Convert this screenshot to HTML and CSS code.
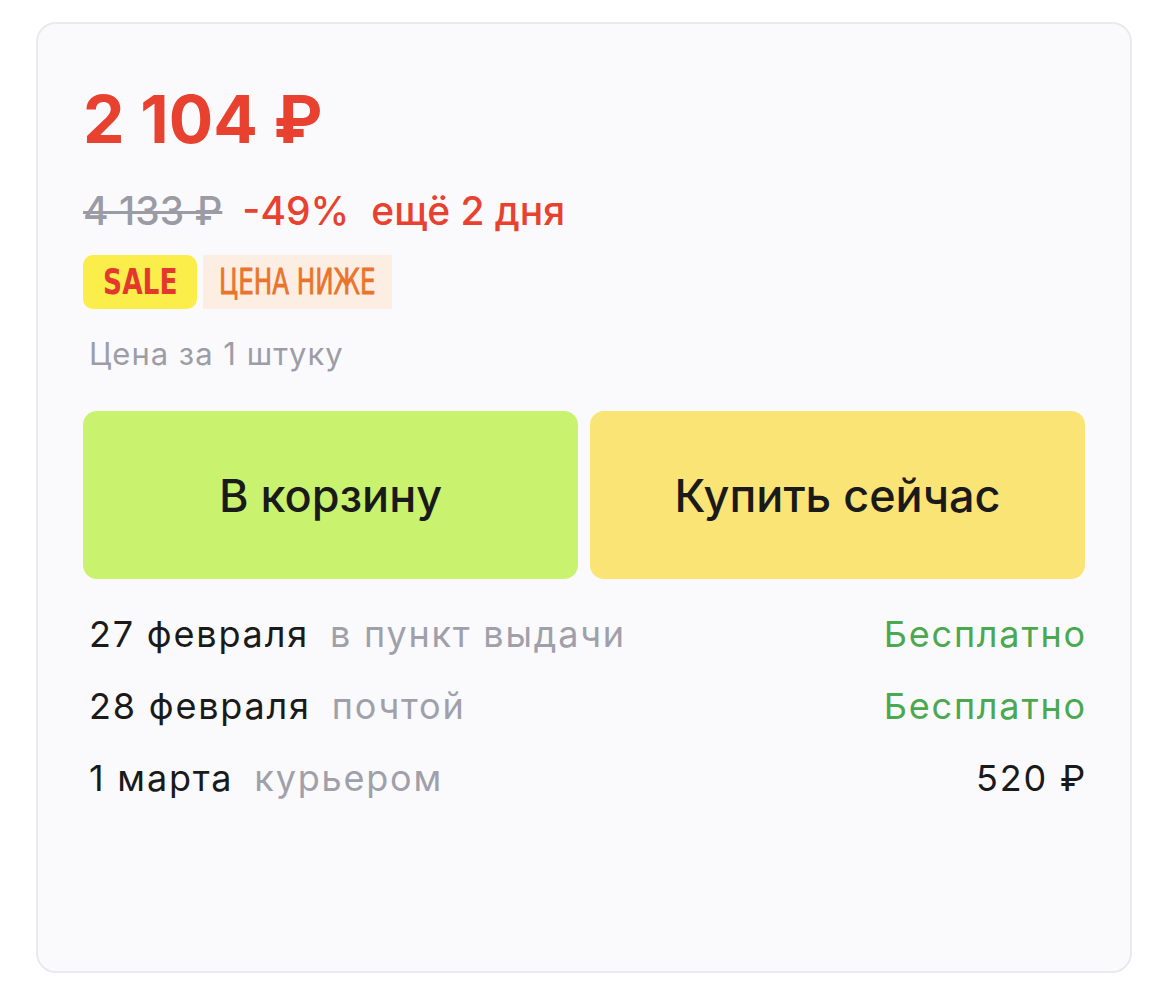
FILE: index.html
```html
<!DOCTYPE html>
<html lang="ru">
<head>
<meta charset="utf-8">
<link rel="stylesheet" href="styles.css">
</head>
<body>
<div class="card">
  <div class="price">2 104 ₽</div>
  <div class="sub">
    <span class="old">4 133 ₽</span>
    <span class="disc">-49%</span>
    <span class="left">ещё 2 дня</span>
  </div>
  <div class="badges">
    <span class="badge sale"><span class="cond">SALE</span></span>
    <span class="badge lower"><span class="cond">ЦЕНА НИЖЕ</span></span>
  </div>
  <div class="unit">Цена за 1 штуку</div>
  <div class="buttons">
    <button class="btn cart">В корзину</button>
    <button class="btn buy">Купить сейчас</button>
  </div>
  <div class="delivery">
    <div class="row"><span class="date">27 февраля</span><span class="how">в пункт выдачи</span><span class="cost free">Бесплатно</span></div>
    <div class="row"><span class="date">28 февраля</span><span class="how">почтой</span><span class="cost free">Бесплатно</span></div>
    <div class="row"><span class="date">1 марта</span><span class="how">курьером</span><span class="cost">520 ₽</span></div>
  </div>
</div>
</body>
</html>
```

FILE: styles.css
```css
html, body {
  margin: 0;
  padding: 0;
  background: #ffffff;
}
body {
  font-family: Inter, "Noto Sans", sans-serif;
  color: #1a1a1a;
}
.card {
  box-sizing: border-box;
  margin: 22px 0 0 36px;
  width: 1096px;
  height: 951px;
  border: 2px solid #e9e9ef;
  border-radius: 20px;
  background: #fafafd;
  padding: 55px 45px 0 45px;
}
.price {
  font-size: 66px;
  line-height: 80px;
  font-weight: 700;
  color: #e8412f;
}
.sub {
  margin-top: 28px;
  height: 48px;
  line-height: 48px;
  font-size: 39px;
  font-weight: 500;
  display: flex;
  gap: 20px;
  white-space: nowrap;
}
.old {
  color: #9b9ba6;
  text-decoration: line-through;
  text-decoration-thickness: 3px;
}
.disc, .left {
  color: #e8412f;
}
.left {
  margin-left: 2px;
}
.badges {
  margin-top: 20px;
  display: flex;
  gap: 6px;
  height: 54px;
}
.badge {
  display: flex;
  align-items: center;
  justify-content: center;
  height: 54px;
  box-sizing: border-box;
  white-space: nowrap;
  overflow: hidden;
}
.cond {
  font-family: "DejaVu Sans Condensed", "DejaVu Sans", sans-serif;
  font-stretch: condensed;
  font-size: 35px;
  font-weight: 700;
  display: inline-block;
  transform: scaleX(0.84);
  white-space: nowrap;
}
.sale {
  width: 114px;
  background: #fbee4a;
  border-radius: 10px;
  color: #e4382e;
}
.lower {
  width: 189px;
  background: #fdeee3;
  color: #e9742c;
}
.lower .cond {
  font-weight: 400;
  -webkit-text-stroke: 0.8px #e9742c;
  transform: scaleX(0.78);
}
.unit {
  margin-top: 25px;
  padding-left: 6px;
  font-size: 31px;
  letter-spacing: 1px;
  line-height: 40px;
  color: #9d9da8;
}
.buttons {
  margin-top: 37px;
  display: flex;
  gap: 12px;
}
.btn {
  flex: 1;
  height: 168px;
  border: none;
  border-radius: 14px;
  font-family: Inter, "Noto Sans", sans-serif;
  font-size: 45px;
  font-weight: 500;
  color: #1a1a1a;
  padding: 0;
}
.cart {
  background: #c9f36f;
}
.buy {
  background: #fae475;
}
.delivery {
  margin-top: 19px;
  padding-left: 6px;
}
.row {
  display: flex;
  height: 72px;
  line-height: 72px;
  font-size: 36px;
  letter-spacing: 1.8px;
  white-space: nowrap;
}
.date {
  color: #1a1a1a;
}
.how {
  margin-left: 21px;
  color: #a0a0aa;
}
.cost {
  margin-left: auto;
  margin-right: -2px;
  color: #1a1a1a;
}
.cost.free {
  color: #4aa84f;
}
```
